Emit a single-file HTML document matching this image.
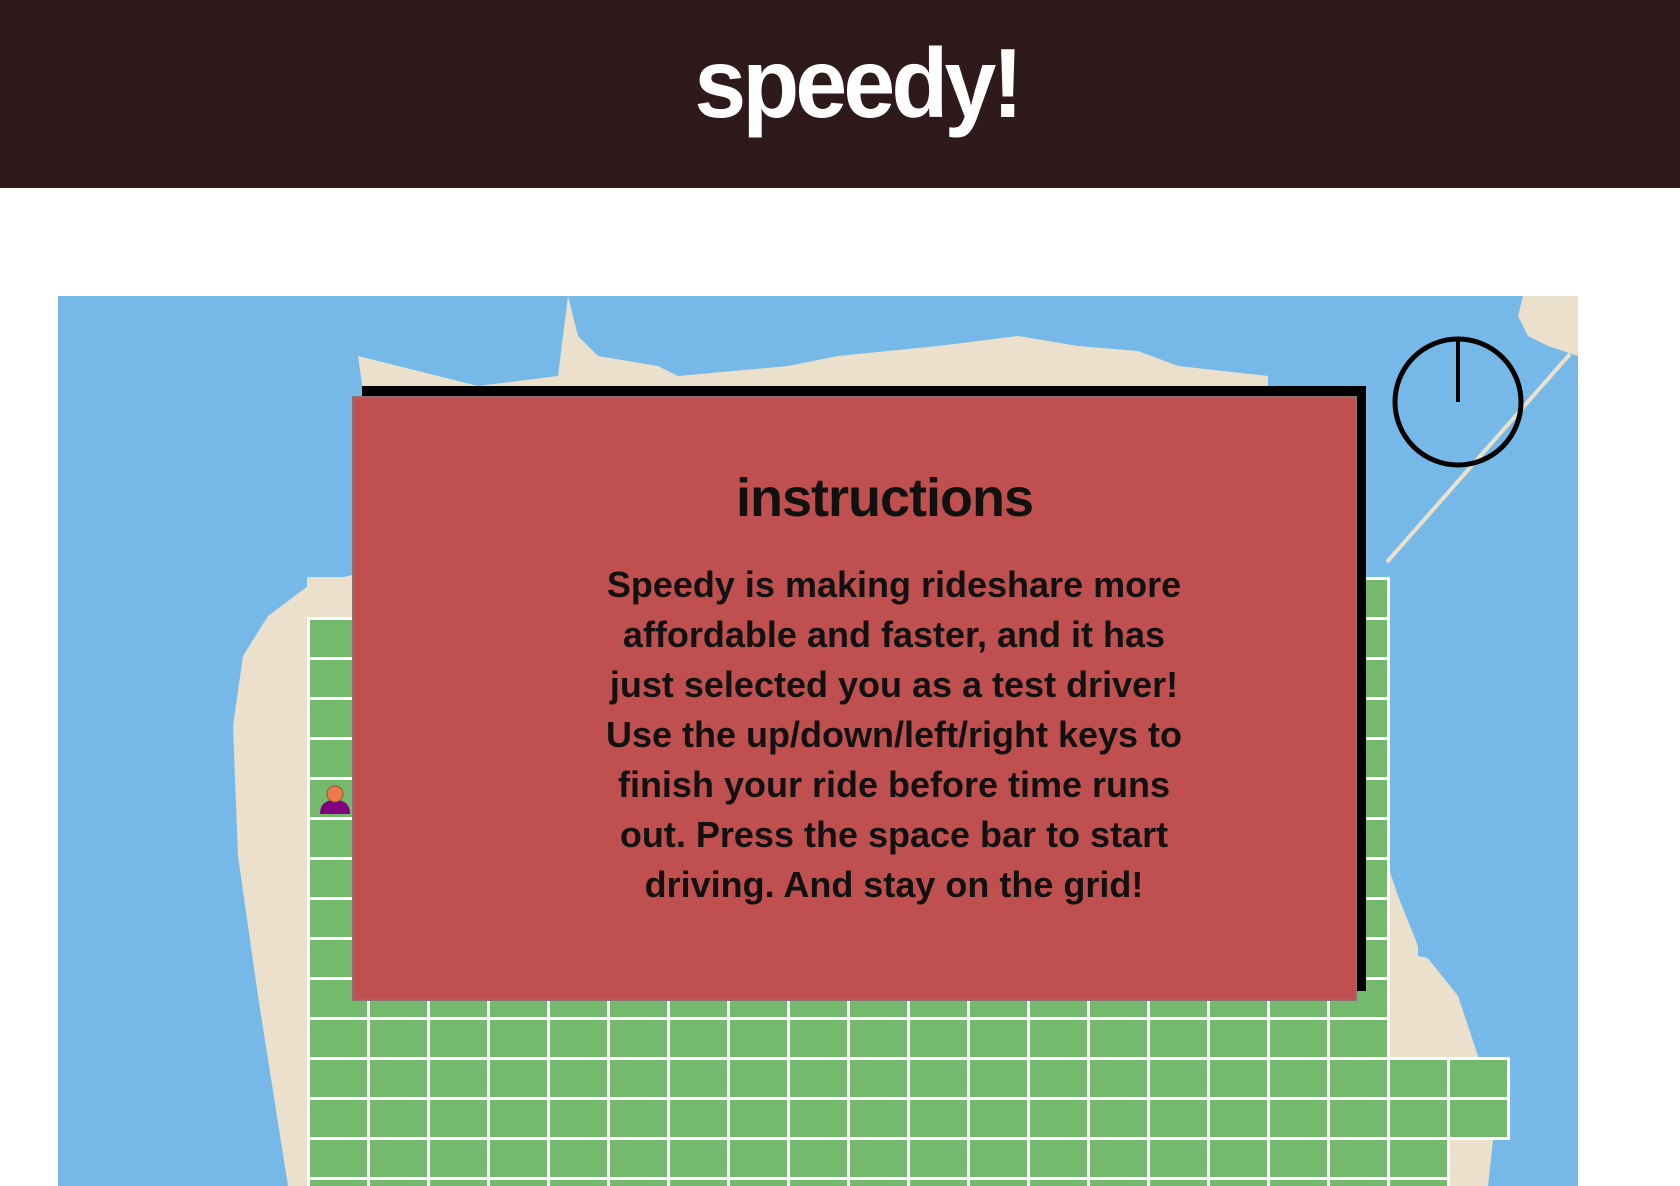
<!DOCTYPE html>
<html><head><meta charset="utf-8"><style>
html,body{margin:0;padding:0;width:1680px;height:1186px;overflow:hidden;background:#fff;font-family:"Liberation Sans",sans-serif}
.hdr{position:absolute;left:0;top:0;width:1680px;height:188px;background:#2e1a1b}
.hdr h1{margin:0;position:absolute;left:17px;width:1680px;top:28px;text-align:center;color:#fff;font-size:98px;font-weight:bold;letter-spacing:-4px;line-height:110px;transform:scaleX(0.95)}
.map{position:absolute;left:58px;top:296px;width:1520px;height:890px;background:#76b9e8;overflow:hidden}
.g{position:absolute;background-color:#74b96e;
background-image:repeating-linear-gradient(90deg,#fff 0 3px,transparent 3px 60px),repeating-linear-gradient(180deg,#fff 0 3px,transparent 3px 40px)}
.modal-sh{position:absolute;left:362px;top:386px;width:1004px;height:605px;background:#000}
.modal{position:absolute;left:352px;top:396px;width:1001px;height:601px;background:#c05050;border:2px solid #8a7070;text-align:center}
.t{position:absolute;left:352px;width:1005px;text-align:center;color:#111;font-weight:bold}
</style></head><body>
<div class="hdr"><h1>speedy!</h1></div>
<div class="map">
<svg width="1520" height="890" style="position:absolute;left:0;top:0">
<g fill="#ebe0cc">
<path d="M510 0 L520 40 L540 60 L600 70 L620 80 L730 70 L780 60 L880 50 L960 40 L1020 50 L1080 55 L1120 70 L1210 80 L1210 200 L1260 260 L1290 290 L1300 320 L1290 420 L1330 480 L1320 540 L1340 600 L1360 650 L1400 700 L1420 760 L1440 800 L1430 890 L230 890 L200 700 L180 560 L175 430 L185 360 L210 320 L250 290 L330 270 L300 60 L420 90 L500 80 Z"/>
</g>
</svg>
<svg width="1520" height="890" style="position:absolute;left:0;top:0">
<path d="M1300 260 L1340 250 L1350 330 L1330 420 L1380 440 L1420 430 L1430 480 L1380 490 L1360 540 L1360 660 L1500 690 L1520 760 L1460 780 L1480 890 L1520 890 L1520 0 L1360 0 Z" fill="#76b9e8"/>
<path d="M1465 0 L1520 0 L1520 60 L1490 50 L1470 40 L1460 20 Z" fill="#ebe0cc"/>
<line x1="1512" y1="58" x2="1329" y2="266" stroke="#ebe0cc" stroke-width="4"/>
</svg>
<div class="g" style="left:249px;top:281px;width:1083px;height:483px"></div>
<div style="position:absolute;left:249px;top:281px;width:45px;height:40px;background:#ebe0cc"></div>
<div class="g" style="left:249px;top:761px;width:1203px;height:83px"></div>
<div class="g" style="left:249px;top:841px;width:1143px;height:60px"></div>
<svg width="40" height="40" style="position:absolute;left:258px;top:484px"><path d="M4 34 Q4 20 19 20 Q34 20 34 34 Z" fill="#800080"/><circle cx="19" cy="14" r="8" fill="#ec7a4a" stroke="#a05030"/></svg>
<svg width="140" height="140" style="position:absolute;left:1330px;top:36px"><circle cx="70" cy="70" r="63" fill="none" stroke="#000" stroke-width="5"/><line x1="70" y1="7" x2="70" y2="70" stroke="#000" stroke-width="4"/></svg>
</div>
<div class="modal-sh"></div>
<div class="modal"></div>
<div class="t" style="top:464px;font-size:54px;line-height:68px;left:382px;letter-spacing:-1px">instructions</div>
<div class="t" style="top:560px;left:596px;width:596px;font-size:36px;line-height:50px">Speedy is making rideshare more affordable and faster, and it has just selected you as a test driver! Use the up/down/left/right keys to finish your ride before time runs out. Press the space bar to start driving. And stay on the grid!</div>
</body></html>
